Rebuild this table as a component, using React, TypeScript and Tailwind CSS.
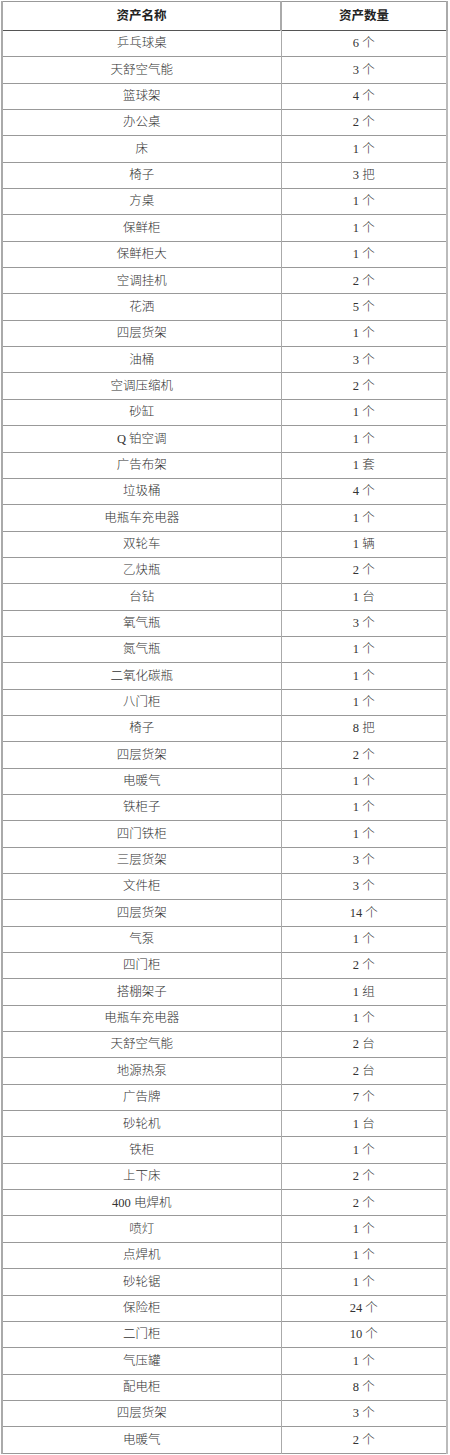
const rows: [string, string][] = [
  ["乒乓球桌", "6 个"],
  ["天舒空气能", "3 个"],
  ["篮球架", "4 个"],
  ["办公桌", "2 个"],
  ["床", "1 个"],
  ["椅子", "3 把"],
  ["方桌", "1 个"],
  ["保鲜柜", "1 个"],
  ["保鲜柜大", "1 个"],
  ["空调挂机", "2 个"],
  ["花洒", "5 个"],
  ["四层货架", "1 个"],
  ["油桶", "3 个"],
  ["空调压缩机", "2 个"],
  ["砂缸", "1 个"],
  ["Q 铂空调", "1 个"],
  ["广告布架", "1 套"],
  ["垃圾桶", "4 个"],
  ["电瓶车充电器", "1 个"],
  ["双轮车", "1 辆"],
  ["乙炔瓶", "2 个"],
  ["台钻", "1 台"],
  ["氧气瓶", "3 个"],
  ["氮气瓶", "1 个"],
  ["二氧化碳瓶", "1 个"],
  ["八门柜", "1 个"],
  ["椅子", "8 把"],
  ["四层货架", "2 个"],
  ["电暖气", "1 个"],
  ["铁柜子", "1 个"],
  ["四门铁柜", "1 个"],
  ["三层货架", "3 个"],
  ["文件柜", "3 个"],
  ["四层货架", "14 个"],
  ["气泵", "1 个"],
  ["四门柜", "2 个"],
  ["搭棚架子", "1 组"],
  ["电瓶车充电器", "1 个"],
  ["天舒空气能", "2 台"],
  ["地源热泵", "2 台"],
  ["广告牌", "7 个"],
  ["砂轮机", "1 台"],
  ["铁柜", "1 个"],
  ["上下床", "2 个"],
  ["400 电焊机", "2 个"],
  ["喷灯", "1 个"],
  ["点焊机", "1 个"],
  ["砂轮锯", "1 个"],
  ["保险柜", "24 个"],
  ["二门柜", "10 个"],
  ["气压罐", "1 个"],
  ["配电柜", "8 个"],
  ["四层货架", "3 个"],
  ["电暖气", "2 个"],
];

export default function App() {
  return (
    <div className="w-[450px] bg-white pt-px pl-px font-['Liberation_Serif','Noto_Sans_CJK_SC',serif] text-[12.5px] text-[#333]">
      <table className="w-[447px] border-collapse table-fixed">
        <colgroup>
          <col className="w-[279px]" />
          <col />
        </colgroup>
        <thead>
          <tr className="h-[29px] border-b border-b-[#555]">
            <th className="border-l-2 border-t border-[#aaa] border-t-[#999] text-center font-bold text-[#222]">
              资产名称
            </th>
            <th className="border-t border-x-2 border-[#aaa] border-t-[#999] text-center font-bold text-[#222]">
              资产数量
            </th>
          </tr>
        </thead>
        <tbody>
          {rows.map(([name, qty], i) => (
            <tr key={i} className="h-[26.35px] border-b border-[#999]">
              <td className="border-l-2 border-r border-l-[#aaa] border-r-[#aaa] text-center font-light leading-none">
                {name}
              </td>
              <td className="border-r-2 border-[#bbb] text-center font-light leading-none">
                {qty}
              </td>
            </tr>
          ))}
        </tbody>
      </table>
    </div>
  );
}
